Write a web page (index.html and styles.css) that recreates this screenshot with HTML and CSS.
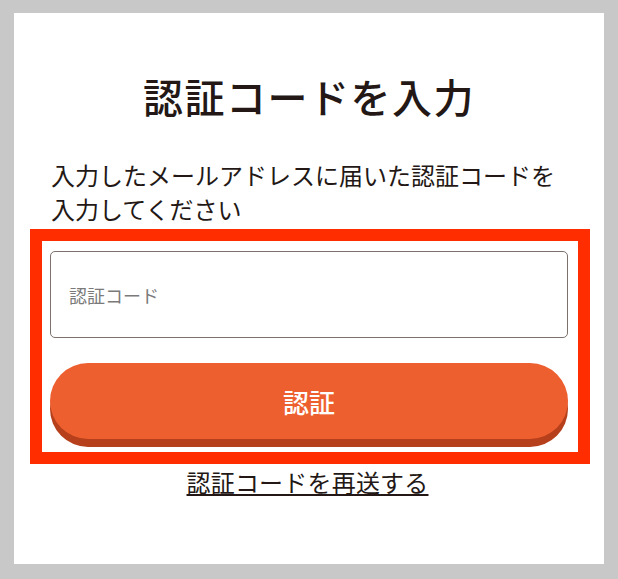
FILE: index.html
```html
<!DOCTYPE html>
<html lang="ja">
<head>
<meta charset="utf-8">
<link rel="stylesheet" href="styles.css">
</head>
<body>
<main class="card">
  <h1 class="title">認証コードを入力</h1>
  <p class="lead">入力したメールアドレスに届いた認証コードを<br>入力してください</p>
  <form class="highlight">
    <input class="code-input" type="text" placeholder="認証コード">
    <button class="submit" type="button">認証</button>
  </form>
  <a class="resend" href="#">認証コードを再送する</a>
</main>
</body>
</html>
```
FILE: styles.css
```css
html, body {
  margin: 0;
  padding: 0;
  background: #c8c8c8;
}
body {
  font-family: "Noto Sans CJK JP", "Noto Sans", sans-serif;
  color: #231815;
}
.card {
  box-sizing: border-box;
  margin: 13px 0 0 14px;
  width: 590px;
  height: 551px;
  background: #fff;
  padding-top: 62px;
  display: flex;
  flex-direction: column;
}
.title {
  margin: 0;
  font-size: 40px;
  line-height: 42px;
  font-weight: 500;
  text-align: center;
  letter-spacing: 1.5px;
}
.lead {
  margin: 41px 0 0 37px;
  font-size: 24px;
  line-height: 34px;
}
.highlight {
  box-sizing: border-box;
  margin: 3px 0 0 16px;
  width: 560px;
  border: 12px solid #ff2d00;
  padding: 10px 10px 5px 8px;
  display: flex;
  flex-direction: column;
  gap: 25px;
}
.code-input {
  box-sizing: border-box;
  width: 518px;
  height: 87px;
  border: 1px solid #7c716d;
  border-radius: 5px;
  padding: 0 0 0 18px;
  font-family: inherit;
  font-size: 18px;
  color: #231815;
  outline: none;
}
.code-input::placeholder {
  color: #7a7a7a;
}
.submit {
  width: 518px;
  height: 76px;
  margin-bottom: 8px;
  border: none;
  border-radius: 38px;
  background: #ee5f2f;
  box-shadow: 0 8px 0 #b5401b;
  color: #fff;
  font-family: inherit;
  font-size: 26px;
  font-weight: 500;
  padding: 0;
}
.resend {
  align-self: center;
  margin: 2px 0 0 -3px;
  font-size: 24px;
  line-height: 32px;
  letter-spacing: 0.2px;
  color: #231815;
  text-decoration: underline;
  text-underline-offset: 2px;
  text-decoration-thickness: 1.5px;
}
```
